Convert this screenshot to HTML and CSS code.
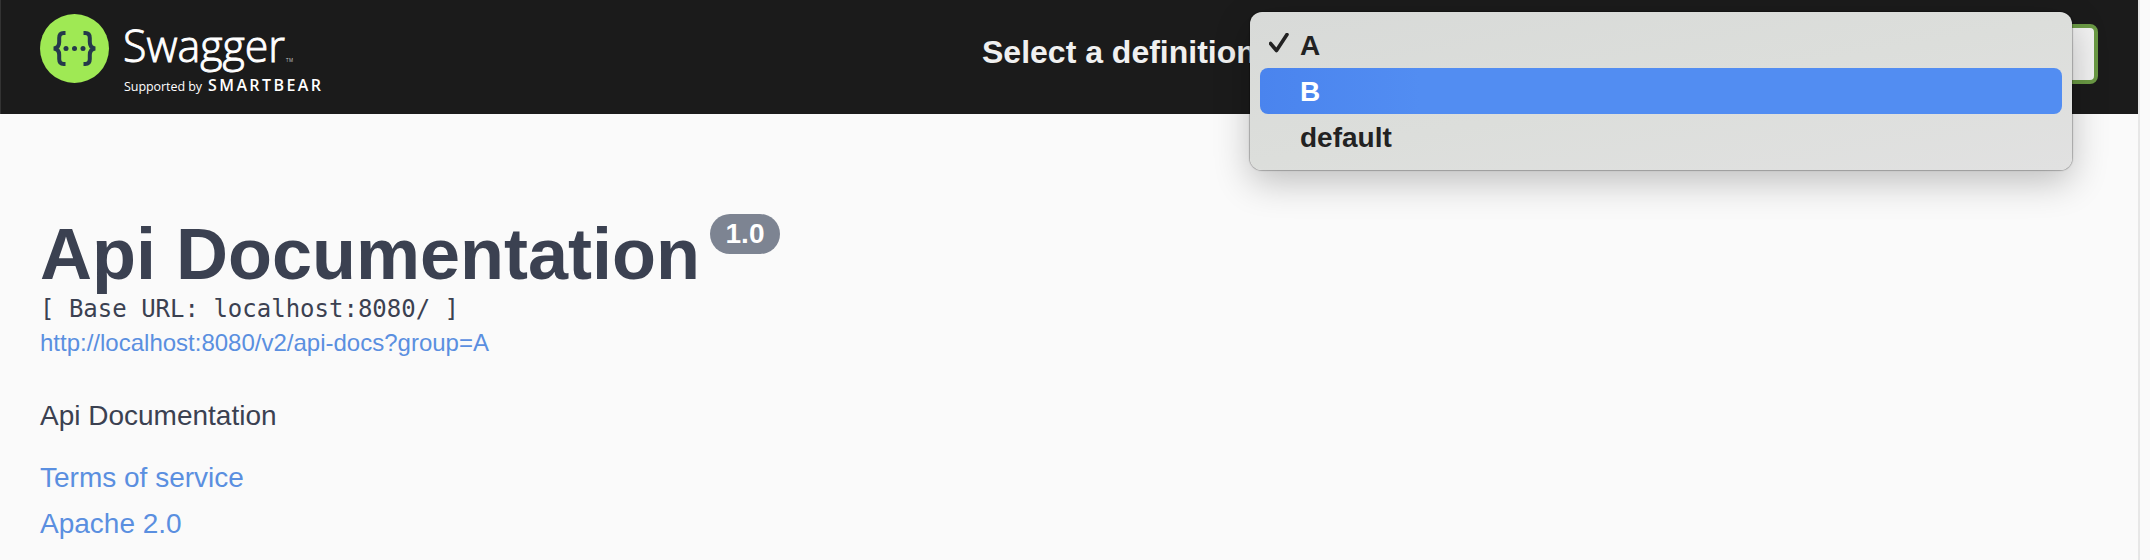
FILE: index.html
```html
<!DOCTYPE html>
<html lang="en">
<head>
<meta charset="utf-8">
<title>Swagger UI</title>
<link rel="stylesheet" href="styles.css">
</head>
<body>
<div class="page">
  <header class="topbar">
    <svg class="logo" width="300" height="100" viewBox="0 0 300 100" role="img" aria-label="Swagger">
      <circle cx="34.5" cy="48.5" r="34.5" fill="#9fe954"/>
      <g fill="none" stroke="#25394b" stroke-width="4">
        <path d="M25.5 33h-1.800q-4.500 0-4.500 5v4q0 6-5.500 6.500q5.500.5 5.500 6.500v4q0 5 4.500 5h1.800"/>
        <path d="M43.500 33h1.800q4.500 0 4.500 5v4q0 6 5.500 6.500q-5.500.5-5.500 6.500v4q0 5-4.500 5h-1.800"/>
      </g>
      <g fill="#25394b"><circle cx="26" cy="48.500" r="2.500"/><circle cx="34.500" cy="48.500" r="2.500"/><circle cx="43" cy="48.500" r="2.500"/></g>
      <text class="logo-name" x="83" y="62" textLength="162" lengthAdjust="spacingAndGlyphs">Swagger</text>
      <text class="logo-tm" x="246" y="62" textLength="7">TM</text>
      <text class="logo-by" x="84" y="90.500" textLength="78">Supported by</text>
      <text class="logo-company" x="168" y="90.500" textLength="115">SMARTBEAR</text>
    </svg>
    <div class="definition">
      <span class="definition-label">Select a definition</span>
      <div class="select">
        <div class="menu">
          <div class="option"><svg class="check" width="20" height="20" viewBox="0 0 20 20"><path d="M1.500 10.500l6 7L18 1.500"/></svg>A</div>
          <div class="option option-active">B</div>
          <div class="option">default</div>
        </div>
      </div>
    </div>
  </header>
  <main class="info">
    <h1 class="title"><span class="title-text">Api Documentation</span><span class="version">1.0</span></h1>
    <pre class="base-url">[ Base URL: localhost:8080/ ]</pre>
    <a class="spec-link">http://localhost:8080/v2/api-docs?group=A</a>
    <p class="description">Api Documentation</p>
    <a class="link">Terms of service</a>
    <a class="link">Apache 2.0</a>
  </main>
</div>
</body>
</html>
```
FILE: styles.css
```css
* { box-sizing: border-box; }
body {
  margin: 0;
  background: #fafafa;
  color: #3b4151;
  font-family: "Liberation Sans", Arial, sans-serif;
}
.page {
  width: 2140px;
  height: 560px;
  border-right: 2px solid #e7e7e7;
  overflow: hidden;
}
.topbar {
  height: 114px;
  padding: 0 40px 0 39px;
  background: #1b1b1b;
  border-left: 1px solid #333;
  display: flex;
  justify-content: space-between;
}
.logo { display: block; flex: none; }
.logo-name { font: 300 44px "Open Sans", sans-serif; fill: #fff; stroke: #fff; stroke-width: .9px; }
.logo-tm { font: 4.500px "Open Sans", sans-serif; fill: #ccc; }
.logo-by { font: 12.500px "Open Sans", sans-serif; fill: #fff; }
.logo-company { font: 600 16px "Open Sans", sans-serif; fill: #fff; letter-spacing: 2px; }
.definition {
  display: flex;
  gap: 20px;
  padding-top: 24px;
}
.definition-label {
  width: 288px;
  color: #f0f0f0;
  font-size: 32px;
  font-weight: bold;
  line-height: 57px;
  white-space: nowrap;
}
.select {
  position: relative;
  width: 808px;
  height: 60px;
  border: 4px solid #6b9a45;
  border-radius: 8px;
  background: #f2f2f2;
}
.menu {
  position: absolute;
  top: -16px;
  right: 22px;
  width: 822px;
  height: 158px;
  padding: 10px;
  border-radius: 12px;
  background: linear-gradient(170deg, #d8dad8, #dcdedb 50%, #e1e1e1);
  box-shadow: 0 0 1px 1px rgba(0, 0, 0, .25), 0 12px 36px rgba(0, 0, 0, .24);
}
.option {
  position: relative;
  height: 46px;
  padding-left: 40px;
  border-radius: 8px;
  color: #222;
  font-size: 28px;
  font-weight: bold;
  line-height: 48px;
}
.option-active { background: linear-gradient(90deg, #4a84ee, #528df2 20%); color: #fff; }
.check { position: absolute; left: 9px; top: 11px; }
.check path { fill: none; stroke: #222; stroke-width: 3.600; stroke-linecap: round; stroke-linejoin: round; }
.info {
  padding: 104px 40px 0;
  display: flex;
  flex-direction: column;
  align-items: flex-start;
}
.title {
  display: flex;
  margin: 0 0 2px;
  font-size: 72px;
  line-height: 72px;
  white-space: nowrap;
}
.title-text { width: 670px; }
.version {
  width: 70px;
  height: 40px;
  margin-top: -4px;
  border-radius: 20px;
  background: #7d8492;
  color: #fff;
  font-size: 28px;
  line-height: 40px;
  text-align: center;
}
.base-url {
  margin: 0;
  font: 24px/34px "DejaVu Sans Mono", monospace;
}
.spec-link {
  color: #5a8fe0;
  font-size: 24px;
  line-height: 34px;
}
.description {
  margin: 33px 0 16px;
  font-size: 28px;
  line-height: 46px;
}
.link {
  color: #5a8fe0;
  font-size: 28px;
  line-height: 46px;
}
```
